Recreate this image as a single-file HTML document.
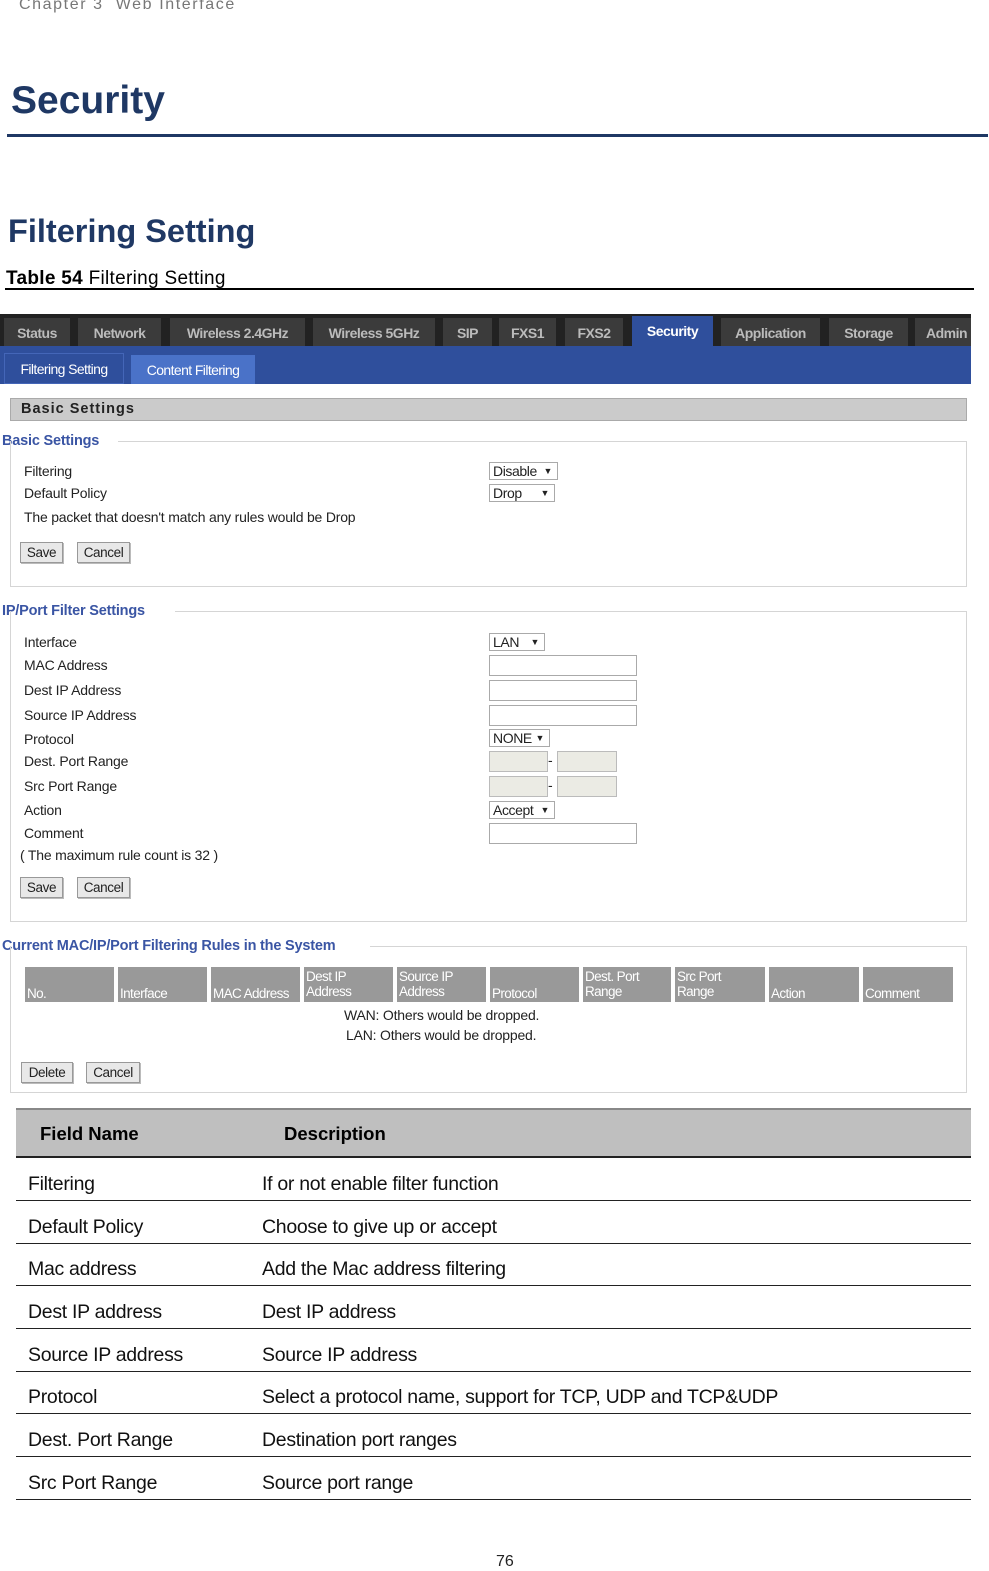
<!DOCTYPE html>
<html><head><meta charset="utf-8"><style>
*{margin:0;padding:0;box-sizing:border-box}
body{width:989px;height:1570px;background:#fff;position:relative;font-family:"Liberation Sans",sans-serif;overflow:hidden}
.a{position:absolute;white-space:nowrap}
.n{font-size:14px;letter-spacing:-0.2px;color:#222}
.tab{position:absolute;top:318px;height:28px;background:#3b3b3b;color:#bbb;font-weight:bold;font-size:14px;letter-spacing:-0.5px;text-align:center;line-height:30px}
.lg{color:#3a55a4;font-weight:bold;font-size:14.5px;letter-spacing:-0.2px}
.fs{position:absolute;border:1px solid #d5d5d5;border-top:none}
.line{position:absolute;height:1px;background:#d5d5d5}
.sel{position:absolute;height:18px;border:1px solid #aaa;background:#fff;font-size:14px;letter-spacing:-0.4px;padding-left:3px;line-height:16px;color:#222}
.sel i{position:absolute;right:5px;top:0;font-style:normal;font-size:9px}
.inp{position:absolute;height:21px;border:1px solid #aaa;background:#fff}
.dis{background:#ebebe4;border-color:#bbb}
.btn{position:absolute;height:21px;border:1px solid #999;background:#e8e8e8;font-size:13.5px;letter-spacing:-0.4px;text-align:center;line-height:19px;color:#222;box-shadow:1px 1px 0 #bbb}
.th{position:absolute;top:967px;height:35px;background:#999;color:#fff;font-size:13.5px;letter-spacing:-0.6px;line-height:15px;padding:2px 2px}
.th span{position:absolute;bottom:1px;left:2px}
.row{position:absolute;left:16px;width:955px;height:43px;border-bottom:1px solid #222;font-size:19.5px;letter-spacing:-0.3px;color:#111}
.row div{position:absolute;top:15px}
</style></head><body>
<div class="a" style="left:19px;top:-4px;font-size:16px;color:#777;letter-spacing:1.6px">Chapter 3&nbsp; Web Interface</div>
<div class="a" style="left:11px;top:79px;font-size:39px;font-weight:bold;color:#1f3864">Security</div>
<div class="a" style="left:7px;top:134px;width:981px;height:3px;background:#1f3864"></div>
<div class="a" style="left:8px;top:213px;font-size:32.5px;font-weight:bold;color:#1f3864">Filtering Setting</div>
<div class="a" style="left:6px;top:268px;font-size:19px;color:#000;letter-spacing:0.3px"><b>Table 54</b> Filtering Setting</div>
<div class="a" style="left:5px;top:288px;width:969px;height:2px;background:#000"></div>

<div class="a" style="left:0;top:314px;width:971px;height:33px;background:#222"></div>
<div class="tab" style="left:4px;width:66px">Status</div>
<div class="tab" style="left:78px;width:83px">Network</div>
<div class="tab" style="left:170px;width:135px">Wireless 2.4GHz</div>
<div class="tab" style="left:313px;width:122px">Wireless 5GHz</div>
<div class="tab" style="left:443px;width:49px">SIP</div>
<div class="tab" style="left:499px;width:57px">FXS1</div>
<div class="tab" style="left:565px;width:58px">FXS2</div>
<div class="tab" style="left:632px;width:81px;background:#2f4f9c;color:#fff;top:316px;height:31px">Security</div>
<div class="tab" style="left:721px;width:99px">Application</div>
<div class="tab" style="left:829px;width:79px">Storage</div>
<div class="tab" style="left:915px;width:56px;text-align:left;padding-left:11px">Admin</div>
<div class="a" style="left:0;top:346px;width:971px;height:38px;background:#2f4f9c"></div>
<div class="a n" style="left:4px;top:353px;width:120px;height:31px;background:#2f4f9c;border:1px solid #4466b8;color:#fff;text-align:center;line-height:30px;letter-spacing:-0.6px">Filtering Setting</div>
<div class="a n" style="left:131px;top:355px;width:124px;height:29px;background:#4a72c8;color:#fff;text-align:center;line-height:30px;letter-spacing:-0.6px">Content Filtering</div>

<div class="a" style="left:10px;top:398px;width:957px;height:23px;background:#cbcbcb;border:1px solid #aaa;font-weight:bold;font-size:14.5px;line-height:21px;padding-left:10px;color:#222;letter-spacing:1px">Basic Settings</div>

<div class="a lg" style="left:2px;top:433px">Basic Settings</div>
<div class="line" style="left:118px;top:441px;width:849px"></div>
<div class="fs" style="left:10px;top:441px;width:957px;height:146px"></div>
<div class="a n" style="left:24px;top:463px">Filtering</div>
<div class="a n" style="left:24px;top:485px">Default Policy</div>
<div class="a n" style="left:24px;top:509px">The packet that doesn't match any rules would be Drop</div>
<div class="sel" style="left:489px;top:462px;width:69px">Disable<i>▼</i></div>
<div class="sel" style="left:489px;top:484px;width:66px">Drop<i>▼</i></div>
<div class="btn" style="left:20px;top:542px;width:43px">Save</div>
<div class="btn" style="left:77px;top:542px;width:53px">Cancel</div>

<div class="a lg" style="left:2px;top:603px">IP/Port Filter Settings</div>
<div class="line" style="left:175px;top:611px;width:792px"></div>
<div class="fs" style="left:10px;top:611px;width:957px;height:311px"></div>
<div class="a n" style="left:24px;top:634px">Interface</div>
<div class="a n" style="left:24px;top:657px">MAC Address</div>
<div class="a n" style="left:24px;top:682px">Dest IP Address</div>
<div class="a n" style="left:24px;top:707px">Source IP Address</div>
<div class="a n" style="left:24px;top:731px">Protocol</div>
<div class="a n" style="left:24px;top:753px">Dest. Port Range</div>
<div class="a n" style="left:24px;top:778px">Src Port Range</div>
<div class="a n" style="left:24px;top:802px">Action</div>
<div class="a n" style="left:24px;top:825px">Comment</div>
<div class="a n" style="left:20px;top:847px">( The maximum rule count is 32 )</div>
<div class="sel" style="left:489px;top:633px;width:56px">LAN<i>▼</i></div>
<div class="inp" style="left:489px;top:655px;width:148px"></div>
<div class="inp" style="left:489px;top:680px;width:148px"></div>
<div class="inp" style="left:489px;top:705px;width:148px"></div>
<div class="sel" style="left:489px;top:729px;width:61px">NONE<i>▼</i></div>
<div class="inp dis" style="left:489px;top:751px;width:59px"></div>
<div class="a n" style="left:548px;top:752px">-</div>
<div class="inp dis" style="left:557px;top:751px;width:60px"></div>
<div class="inp dis" style="left:489px;top:776px;width:59px"></div>
<div class="a n" style="left:548px;top:777px">-</div>
<div class="inp dis" style="left:557px;top:776px;width:60px"></div>
<div class="sel" style="left:489px;top:801px;width:66px">Accept<i>▼</i></div>
<div class="inp" style="left:489px;top:823px;width:148px"></div>
<div class="btn" style="left:20px;top:877px;width:43px">Save</div>
<div class="btn" style="left:77px;top:877px;width:53px">Cancel</div>

<div class="a lg" style="left:2px;top:938px">Current MAC/IP/Port Filtering Rules in the System</div>
<div class="line" style="left:370px;top:946px;width:597px"></div>
<div class="fs" style="left:10px;top:946px;width:957px;height:147px"></div>
<div class="th" style="left:25px;width:89px"><span>No.</span></div>
<div class="th" style="left:118px;width:89px"><span>Interface</span></div>
<div class="th" style="left:211px;width:89px"><span>MAC Address</span></div>
<div class="th" style="left:304px;width:89px">Dest IP<br>Address</div>
<div class="th" style="left:397px;width:89px">Source IP<br>Address</div>
<div class="th" style="left:490px;width:89px"><span>Protocol</span></div>
<div class="th" style="left:583px;width:88px">Dest. Port<br>Range</div>
<div class="th" style="left:675px;width:90px">Src Port<br>Range</div>
<div class="th" style="left:769px;width:90px"><span>Action</span></div>
<div class="th" style="left:863px;width:90px"><span>Comment</span></div>
<div class="a n" style="left:344px;top:1007px">WAN: Others would be dropped.</div>
<div class="a n" style="left:346px;top:1027px">LAN: Others would be dropped.</div>
<div class="btn" style="left:21px;top:1062px;width:52px">Delete</div>
<div class="btn" style="left:86px;top:1062px;width:54px">Cancel</div>

<div class="a" style="left:16px;top:1108px;width:955px;height:50px;background:#bfbfbf;border-top:2px solid #888;border-bottom:2px solid #222;font-size:18.5px;font-weight:bold;color:#000">
<span class="a" style="left:24px;top:13px">Field Name</span><span class="a" style="left:268px;top:13px">Description</span></div>
<div class="row" style="top:1158px"><div style="left:12px">Filtering</div><div style="left:246px">If or not enable filter function</div></div>
<div class="row" style="top:1201px"><div style="left:12px">Default Policy</div><div style="left:246px">Choose to give up or accept</div></div>
<div class="row" style="top:1243px"><div style="left:12px">Mac address</div><div style="left:246px">Add the Mac address filtering</div></div>
<div class="row" style="top:1286px"><div style="left:12px">Dest IP address</div><div style="left:246px">Dest IP address</div></div>
<div class="row" style="top:1329px"><div style="left:12px">Source IP address</div><div style="left:246px">Source IP address</div></div>
<div class="row" style="top:1371px"><div style="left:12px">Protocol</div><div style="left:246px">Select a protocol name, support for TCP, UDP and TCP&amp;UDP</div></div>
<div class="row" style="top:1414px"><div style="left:12px">Dest. Port Range</div><div style="left:246px">Destination port ranges</div></div>
<div class="row" style="top:1457px"><div style="left:12px">Src Port Range</div><div style="left:246px">Source port range</div></div>
<div class="a" style="left:496px;top:1553px;font-size:16px;color:#222">76</div>
</body></html>
